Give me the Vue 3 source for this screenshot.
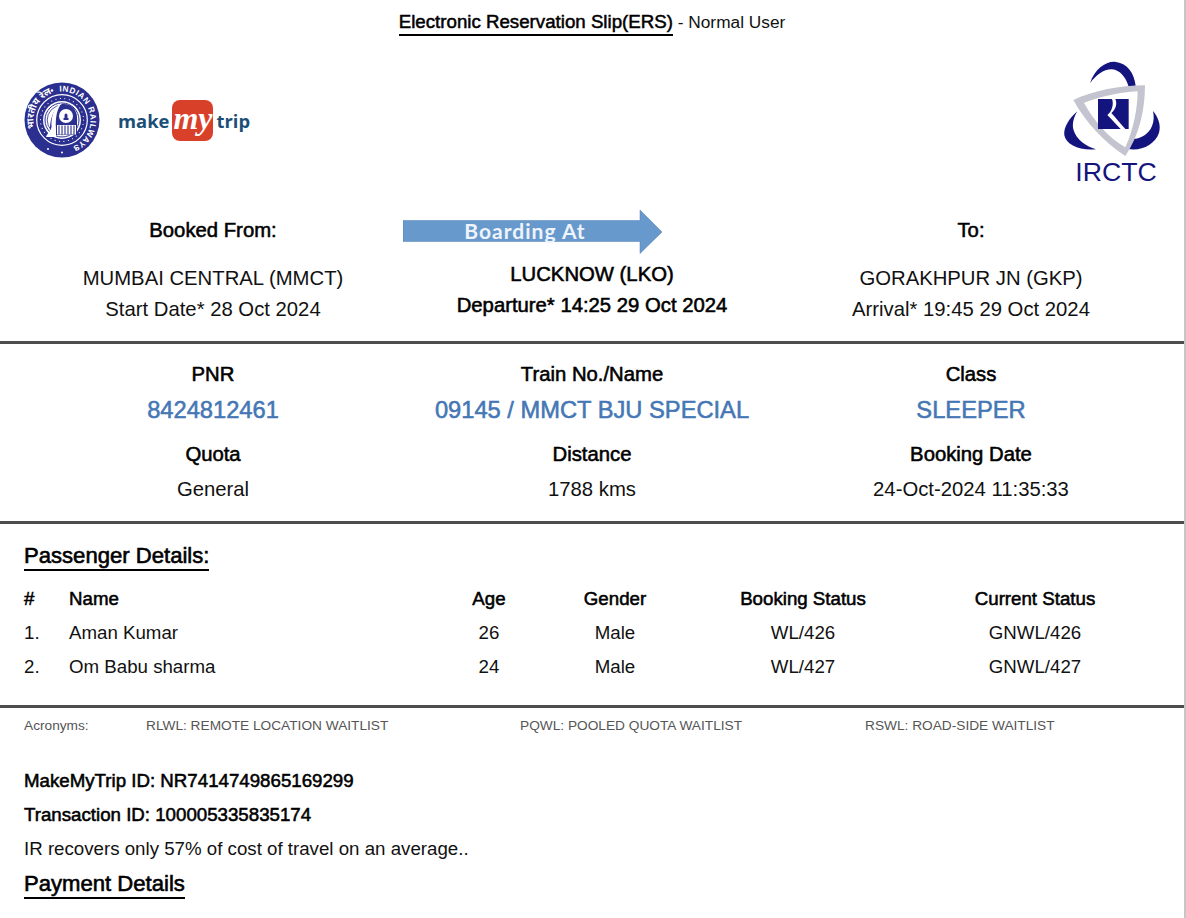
<script setup>
const top = [
  { label: 'Booked From:', value: 'MUMBAI CENTRAL (MMCT)', sub: 'Start Date* 28 Oct 2024' },
  { label: 'To:', value: 'GORAKHPUR JN (GKP)', sub: 'Arrival* 19:45 29 Oct 2024' },
]
const info = [
  ['PNR', 'Train No./Name', 'Class'],
  ['8424812461', '09145 / MMCT BJU SPECIAL', 'SLEEPER'],
  ['Quota', 'Distance', 'Booking Date'],
  ['General', '1788 kms', '24-Oct-2024 11:35:33'],
]
const rowClass = ['faux', 'link', 'faux', 'plain']
const passengers = [
  ['1.', 'Aman Kumar', '26', 'Male', 'WL/426', 'GNWL/426'],
  ['2.', 'Om Babu sharma', '24', 'Male', 'WL/427', 'GNWL/427'],
]
</script>

<template>
  <div class="page">
    <header class="title">
      <span class="title-main">Electronic Reservation Slip(ERS)</span>
      <span class="title-sub">&nbsp;- Normal User</span>
    </header>

    <div class="logos">
      <svg class="rail" viewBox="0 0 76 76" width="76" height="76">
        <defs>
          <path id="ringText" d="M38 38 m-28.5 0 a28.5 28.5 0 1 1 57 0 a28.5 28.5 0 1 1 -57 0" />
        </defs>
        <circle cx="38" cy="38" r="37.5" fill="#2b2f8f" />
        <circle cx="38" cy="38" r="25.3" fill="none" stroke="#fff" stroke-width="1.2" />
        <circle cx="38" cy="38" r="21.5" fill="none" stroke="#fff" stroke-width="1.1" stroke-linecap="round" stroke-dasharray="0.1 4.4" />
        <circle cx="38" cy="38" r="19" fill="#fff" />
        <circle cx="38" cy="38" r="17" fill="none" stroke="#2b2f8f" stroke-width="1" />
        <circle cx="38" cy="38" r="14.8" fill="none" stroke="#2b2f8f" stroke-width=".8" />
        <path d="M26 53 C25 38 29 26 38 22 C47 21 53 27 53 36 L53 53 Z" fill="#2b2f8f" />
        <path d="M22 55 C24 50 27 49 27.5 45 C27 34 30 25 38 20.5 C33 27 31 36 32 47 L32 55 Z" fill="#fff" />
        <circle cx="42" cy="34" r="7" fill="#fff" />
        <path d="M39.5 38 h5 v-2 h-1 v-2.5 a1.5 2 0 1 0 -3 0 v2.5 h-1 Z" fill="#2b2f8f" />
        <rect x="33" y="43" width="19" height="9.5" fill="#fff" />
        <path d="M35 43.5v9M38 43.5v9M41 43.5v9M44 43.5v9M47 43.5v9M50 43.5v9" stroke="#2b2f8f" stroke-width="1.1" />
        <text class="rail-text">
          <textPath href="#ringText" startOffset="23.6%">INDIAN RAILWAYS</textPath>
        </text>
        <text class="rail-hindi" transform="rotate(-17 38 38)">
          <textPath href="#ringText" startOffset="0">भारतीय रेल</textPath>
        </text>
        <circle cx="28" cy="8.5" r="1.3" fill="#fff" />
        <circle cx="38" cy="70.5" r="1" fill="#fff" />
        <circle cx="24" cy="67" r="1" fill="#fff" />
        <circle cx="52" cy="67" r="1" fill="#fff" />
      </svg>

      <div class="mmt">
        <span class="mmt-word">make</span>
        <span class="mmt-badge">my</span>
        <span class="mmt-word">trip</span>
      </div>

      <svg class="irctc" viewBox="0 0 438 420" width="146" height="140">
        <path d="M150 100 C165 55 200 32 228 36 C262 40 283 70 287 107 L266 110 C258 82 240 60 216 58 C192 57 168 75 150 100 Z" fill="#14147e" />
        <path d="M112 184 C88 205 70 232 73 256 C78 285 120 303 168 298 C140 290 108 270 100 238 C96 220 102 200 112 184 Z" fill="#14147e" />
        <path d="M339 183 C346 215 336 246 304 261 C294 266 282 268 270 266 L262 296 C300 305 345 285 357 248 C364 226 354 200 339 183 Z" fill="#14147e" />
        <path fill-rule="evenodd" fill="#c3c4cf" d="M100 150 C160 122 240 106 315 106 C315 180 298 256 256 318 C192 276 136 216 100 150 Z M132 158 C160 210 204 262 256 292 C280 240 292 180 293 124 C240 126 184 140 132 158 Z" />
        <rect x="174" y="147" width="92" height="90" fill="#14147e" />
        <path d="M216 147 L226 147 C232 160 228 178 214 189 C228 204 240 220 256 237 L242 237 C228 222 216 210 202 195 C216 184 222 162 216 147 Z" fill="#fff" />
        <text class="irctc-text" x="228" y="392" text-anchor="middle">IRCTC</text>
      </svg>
    </div>

    <section class="route">
      <div class="route-cell">
        <div class="label faux">{{ top[0].label }}</div>
        <div class="value spaced">{{ top[0].value }}</div>
        <div class="value">{{ top[0].sub }}</div>
      </div>
      <div class="route-cell">
        <svg class="arrow" viewBox="0 0 260 44" width="260" height="44">
          <path d="M0 10.5 H237 V0 L259 22 L237 43.5 V31.5 H0 Z" fill="#6899cd" stroke="#4f7fb5" stroke-width=".5" />
          <text class="arrow-text" x="122" y="29" text-anchor="middle">Boarding At</text>
        </svg>
        <div class="value faux boarding">LUCKNOW (LKO)</div>
        <div class="value faux">Departure* 14:25 29 Oct 2024</div>
      </div>
      <div class="route-cell">
        <div class="label faux">{{ top[1].label }}</div>
        <div class="value spaced">{{ top[1].value }}</div>
        <div class="value">{{ top[1].sub }}</div>
      </div>
    </section>

    <div class="rule" />

    <section class="info">
      <div v-for="(row, r) in info" :key="r" class="info-row" :class="'row-' + r">
        <div v-for="cell in row" :key="cell" :class="rowClass[r]">{{ cell }}</div>
      </div>
    </section>

    <div class="rule" />

    <section class="passengers">
      <h2 class="heading">Passenger Details:</h2>
      <div class="pax-row pax-head faux">
        <div>#</div><div>Name</div><div class="c">Age</div><div class="c">Gender</div><div class="c">Booking Status</div><div class="c">Current Status</div>
      </div>
      <div v-for="p in passengers" :key="p[0]" class="pax-row">
        <div>{{ p[0] }}</div><div>{{ p[1] }}</div><div class="c">{{ p[2] }}</div><div class="c">{{ p[3] }}</div><div class="c">{{ p[4] }}</div><div class="c">{{ p[5] }}</div>
      </div>
    </section>

    <div class="rule" />

    <section class="acronyms">
      <div>Acronyms:</div>
      <div>RLWL: REMOTE LOCATION WAITLIST</div>
      <div>PQWL: POOLED QUOTA WAITLIST</div>
      <div>RSWL: ROAD-SIDE WAITLIST</div>
    </section>

    <section class="foot">
      <div class="foot-line faux">MakeMyTrip ID: NR7414749865169299</div>
      <div class="foot-line faux">Transaction ID: 100005335835174</div>
      <div class="foot-line">IR recovers only 57% of cost of travel on an average..</div>
      <h2 class="heading pay">Payment Details</h2>
    </section>
  </div>
</template>

<style scoped>
.page {
  width: 1186px;
  height: 918px;
  box-sizing: border-box;
  overflow: hidden;
  background: #fff;
  color: #111;
  font-family: "Liberation Sans", Arial, sans-serif;
  font-size: 20.3px;
  border-right: 2px solid #c6c6c9;
}
.faux {
  -webkit-text-stroke: 0.55px #000;
  color: #000;
}
.title {
  height: 44px;
  line-height: 44px;
  text-align: center;
  font-size: 17.3px;
}
.title-main {
  -webkit-text-stroke: 0.5px #000;
  color: #000;
  font-size: 18.7px;
  border-bottom: 2px solid #000;
  padding-bottom: 2px;
}
.logos {
  position: relative;
  height: 160px;
  display: flex;
  align-items: flex-start;
  padding: 38px 0 0 24px;
  box-sizing: border-box;
}
.rail { flex: none; }
.rail-text {
  font: 700 8.2px "Liberation Sans", sans-serif;
  letter-spacing: 0.6px;
  fill: #fff;
}
.rail-hindi {
  font: 700 9.5px "Noto Sans", "DejaVu Sans", sans-serif;
  fill: #fff;
}
.mmt {
  display: flex;
  align-items: center;
  gap: 3px;
  margin: 18px 0 0 18px;
  height: 41px;
}
.mmt-word {
  font: 700 18.4px "Open Sans", sans-serif;
  color: #1c4f78;
}
.mmt-badge {
  width: 41px;
  height: 41px;
  border-radius: 8px;
  background: #d9402a;
  color: #fff;
  font: italic 700 32px/36px "Liberation Serif", serif;
  text-align: center;
}
.irctc {
  position: absolute;
  right: -2px;
  top: 6px;
}
.irctc-text {
  font: 400 80px "Liberation Sans", sans-serif;
  fill: #14147e;
}
.route {
  display: grid;
  grid-template-columns: 379px 379px 379px;
  padding-left: 23.5px;
  height: 137px;
  padding-top: 6px;
  box-sizing: border-box;
  text-align: center;
}
.label { height: 36px; line-height: 36px; margin: 2px 0 15px; }
.value { height: 31px; line-height: 31px; }
.arrow { display: block; margin-left: 0.5px; }
.arrow-text {
  font: 700 21px Lato, "Open Sans", sans-serif;
  letter-spacing: 1px;
  fill: #eef4fb;
}
.boarding { margin-top: 5px; }
.rule { height: 3px; background: #4d4d4d; }
.info { padding-top: 12px; height: 177px; box-sizing: border-box; }
.info-row {
  display: grid;
  grid-template-columns: 379px 379px 379px;
  padding-left: 23.5px;
  height: 36px;
  line-height: 36px;
  text-align: center;
}
.row-2 { margin-top: 8px; }
.row-3 { margin-top: -1px; }
.link {
  color: #4577b5;
  -webkit-text-stroke: 0.55px #4577b5;
  font-size: 23.7px;
}
.plain { color: #111; }
.passengers { padding-left: 24px; height: 162px; box-sizing: border-box; }
.heading {
  margin: 0;
  font-weight: 400;
  font-size: 22.1px;
  line-height: 26px;
  -webkit-text-stroke: 0.6px #000;
  color: #000;
  display: table;
  border-bottom: 2px solid #000;
}
.passengers .heading { margin-top: 19px; }
.pax-row {
  display: grid;
  grid-template-columns: 45px 381px 78px 174px 202px 262px;
  height: 34px;
  line-height: 34px;
  font-size: 18.7px;
}
.pax-head { margin-top: 11px; }
.c { text-align: center; }
.acronyms {
  display: grid;
  grid-template-columns: 122px 374px 345px 1fr;
  padding-left: 24px;
  height: 37px;
  line-height: 35px;
  font-size: 13.7px;
  color: #555;
}
.foot { padding: 18px 0 0 24px; font-size: 18.7px; }
.foot-line { height: 34px; line-height: 35px; }
.pay { margin-top: 6px; }
</style>
